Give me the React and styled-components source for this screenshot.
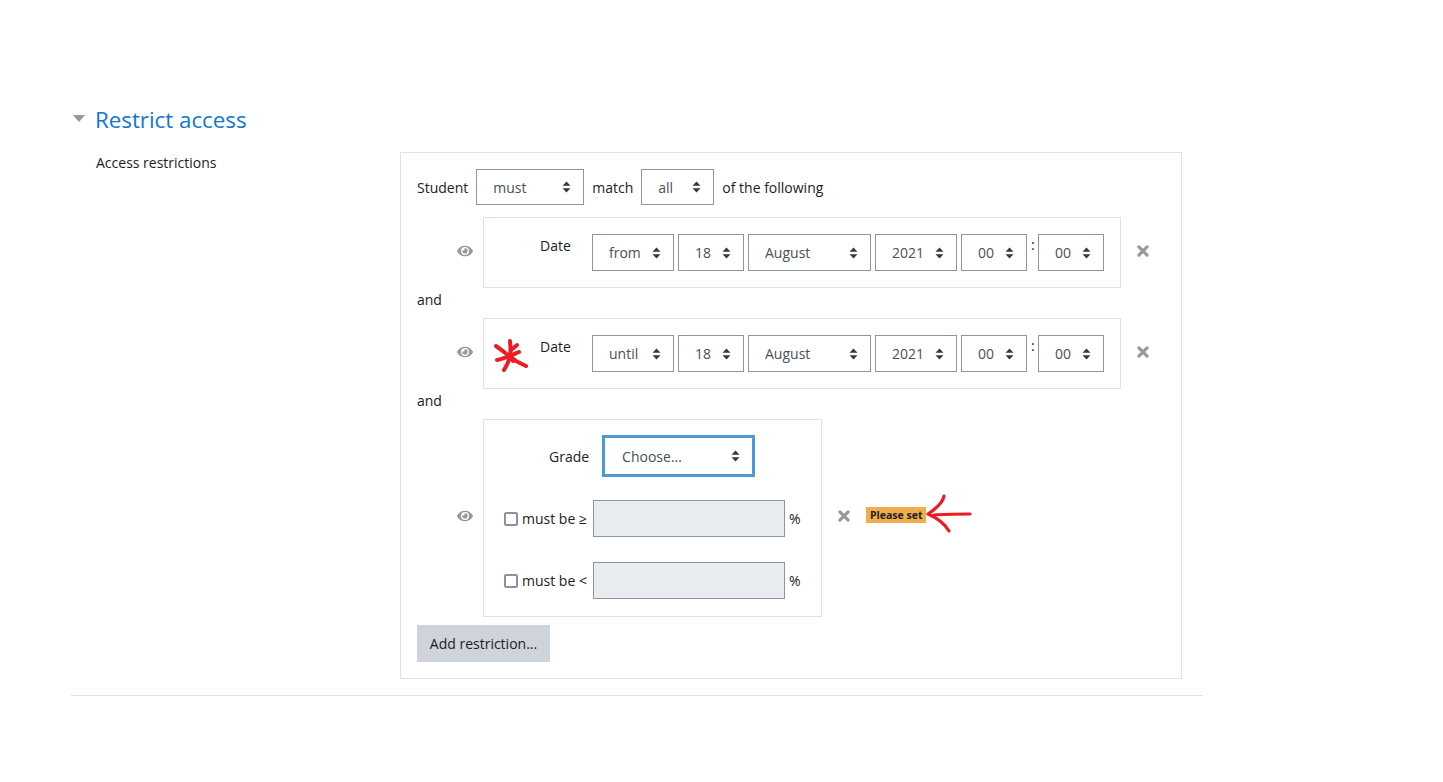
import React from "react";
import styled, { createGlobalStyle } from "styled-components";
import { FaEye } from "react-icons/fa";

const GlobalStyle = createGlobalStyle`
  html, body {
    margin: 0;
    background: #fff;
    color: #1d2125;
    font-family: "Open Sans", "Noto Sans", "Liberation Sans", sans-serif;
    font-size: 14px;
  }
`;

const Page = styled.div`
  width: 1132px;
  margin-left: 71px;
  padding-top: 103px;
`;

const Header = styled.div`
  display: flex;
  align-items: center;
  height: 32px;
  gap: 10px;
  margin-left: 2px;
`;

const Triangle = styled.span`
  width: 0;
  height: 0;
  margin-bottom: 2px;
  border-left: 6.5px solid transparent;
  border-right: 6.5px solid transparent;
  border-top: 7px solid #999;
`;

const Title = styled.h3`
  margin: 0;
  font-size: 22.3px;
  font-weight: 400;
  color: #1177d1;
`;

const FormRow = styled.div`
  display: flex;
  margin-top: 17px;
  padding-bottom: 16px;
  border-bottom: 1px solid #dee2e6;
`;

const FormLabel = styled.div`
  width: 304px;
  padding-left: 25px;
  padding-top: 1px;
  line-height: 20px;
`;

const Panel = styled.div`
  width: 782px;
  box-sizing: border-box;
  padding: 16px;
  border: 1px solid #dee2e6;
`;

const TopRow = styled.div`
  display: flex;
  align-items: center;
  gap: 8px;
  height: 36px;
  margin-bottom: 12px;
`;

const Rule = styled.div`
  display: flex;
  align-items: center;
`;

const EyeSlot = styled.div`
  width: 66px;
  padding-right: 10px;
  box-sizing: border-box;
  display: flex;
  justify-content: flex-end;
  margin-bottom: ${(p) => p.$lift}px;
  color: #999;
  font-size: 16px;
`;

const RuleBox = styled.div`
  position: relative;
  display: flex;
  align-items: flex-start;
  height: 71px;
  box-sizing: border-box;
  padding: 16px;
  width: 638px;
  border: 1px solid #dee2e6;
`;

const DateLabel = styled.span`
  margin-left: 40px;
  width: 71px;
  line-height: 24px;
`;

const Fields = styled.div`
  display: flex;
  gap: 4px;
`;

const Colon = styled.span`
  width: 3px;
  line-height: 22px;
  text-align: center;
`;

const Remove = styled.svg`
  flex: none;
  width: 12px;
  height: 12px;
  margin-left: 16px;
  margin-bottom: ${(p) => p.$lift}px;
`;

const RemoveIcon = ({ lift }) => (
  <Remove $lift={lift} viewBox="0 0 12 12">
    <path d="M1.9 1.9 L10.1 10.1 M10.1 1.9 L1.9 10.1" stroke="#999" strokeWidth="3.2" strokeLinecap="round" />
  </Remove>
);

const Joiner = styled.div`
  height: 30px;
  line-height: 24px;
`;

const SelectWrap = styled.span`
  position: relative;
  display: block;
  width: ${(p) => p.$w}px;
  height: ${(p) => (p.$h ? p.$h : 37)}px;
  flex: none;
`;

const NativeSelect = styled.select`
  appearance: none;
  width: 100%;
  height: 100%;
  box-sizing: border-box;
  padding: 0 0 0 ${(p) => (p.$focus ? 17 : 16)}px;
  background: #fff;
  border: ${(p) => (p.$focus ? "3.5px solid #4f97d9" : "1px solid #8f959e")};
  border-radius: 0;
  outline: none;
  color: #495057;
  font: inherit;
`;

const CaretIcon = styled.svg`
  position: absolute;
  right: ${(p) => (p.$focus ? 15 : 13)}px;
  top: 50%;
  margin-top: -6px;
  width: 9px;
  height: 12px;
  pointer-events: none;
`;

const Select = ({ w, h, focus, value }) => (
  <SelectWrap $w={w} $h={h}>
    <NativeSelect $focus={focus} defaultValue={value}>
      <option>{value}</option>
    </NativeSelect>
    <CaretIcon $focus={focus} viewBox="0 0 9 12">
      <path d="M4.5 0.5 L8.5 4.8 H0.5 Z M4.5 11.5 L0.5 7.2 H8.5 Z" fill="#343a40" />
    </CaretIcon>
  </SelectWrap>
);

const GradeBox = styled.div`
  width: 339px;
  height: 198px;
  box-sizing: border-box;
  padding: 15px 0 0 20px;
  border: 1px solid #dee2e6;
`;

const GradeRow = styled.div`
  display: flex;
  align-items: center;
  gap: 13px;
  height: 42px;
  margin: 0 0 23px 45px;
`;

const CheckRow = styled.div`
  display: flex;
  align-items: center;
  height: 37px;
  margin-bottom: 25px;
`;

const CheckBox = styled.input.attrs({ type: "checkbox" })`
  appearance: none;
  width: 14px;
  height: 14px;
  margin: 0 4px 0 0;
  box-sizing: border-box;
  border: 2px solid #8f8f9d;
  border-radius: 2px;
  background: #fff;
`;

const CheckText = styled.span`
  width: 71px;
  white-space: nowrap;
`;

const GreyInput = styled.input`
  width: 192px;
  height: 37px;
  box-sizing: border-box;
  background: #e9ecef;
  border: 1px solid #8f959e;
  border-radius: 0;
  padding: 0;
`;

const Percent = styled.span`
  margin-left: 4px;
`;

const Badge = styled.span`
  margin: 0 0 6px 16px;
  padding: 0 4px;
  height: 16px;
  line-height: 17px;
  background: #f0ad4e;
  color: #1d2125;
  font-size: 10.5px;
  font-weight: 700;
  white-space: nowrap;
`;

const AddButton = styled.button`
  display: block;
  width: 133px;
  height: 37px;
  margin-top: 8px;
  padding: 0;
  border: none;
  background: #ced4da;
  color: #1d2125;
  font: inherit;
`;

const Scribble = styled.svg`
  position: absolute;
  left: ${(p) => p.$x}px;
  top: ${(p) => p.$y}px;
  overflow: visible;
  pointer-events: none;
`;

const Star = () => (
  <Scribble $x={9} $y={19} width="36" height="36" viewBox="0 0 36 36">
    <g fill="none" stroke="#ed1c24" strokeWidth="4" strokeLinecap="round" strokeLinejoin="round">
      <path d="M17 3 C17.5 10 18 14 17 19 C15.5 24 13.5 28 11 32" />
      <path d="M3 8 C10 13 16 18 23 23 L33 28" />
      <path d="M4 22 C11 21 17 18 26 14" />
      <path d="M18 12 L24 7" />
      <path d="M16 17 L20 23" />
    </g>
  </Scribble>
);

const ArrowWrap = styled.span`
  position: relative;
  width: 0;
  height: 0;
  align-self: center;
`;

const Arrow = () => (
  <ArrowWrap>
    <Scribble $x={0} $y={-24} width="46" height="42" viewBox="0 0 46 42">
      <g fill="none" stroke="#ed1c24" strokeWidth="3.2" strokeLinecap="round" strokeLinejoin="round">
        <path d="M18 2 C17 8 11 14 2 20 C9 23 18 29 23 37" />
        <path d="M8 21 C18 20 32 20 44 20" />
      </g>
    </Scribble>
  </ArrowWrap>
);

const DateRule = ({ direction, star }) => (
  <Rule>
    <EyeSlot $lift={3}><FaEye /></EyeSlot>
    <RuleBox>
      {star && <Star />}
      <DateLabel>Date</DateLabel>
      <Fields>
        <Select w={82} value={direction} />
        <Select w={66} value="18" />
        <Select w={123} value="August" />
        <Select w={82} value="2021" />
        <Select w={66} value="00" />
        <Colon>:</Colon>
        <Select w={66} value="00" />
      </Fields>
    </RuleBox>
    <RemoveIcon lift={3} />
  </Rule>
);

export default function App() {
  return (
    <Page>
      <GlobalStyle />
      <Header>
        <Triangle />
        <Title>Restrict access</Title>
      </Header>
      <FormRow>
        <FormLabel>Access restrictions</FormLabel>
        <Panel>
          <TopRow>
            <span>Student</span>
            <Select w={108} h={36} value="must" />
            <span>match</span>
            <Select w={73} h={36} value="all" />
            <span>of the following</span>
          </TopRow>
          <DateRule direction="from" />
          <Joiner>and</Joiner>
          <DateRule direction="until" star />
          <Joiner>and</Joiner>
          <Rule>
            <EyeSlot $lift={4}><FaEye /></EyeSlot>
            <GradeBox>
              <GradeRow>
                <span>Grade</span>
                <Select w={153} h={42} focus value="Choose..." />
              </GradeRow>
              <CheckRow>
                <CheckBox />
                <CheckText>must be ≥</CheckText>
                <GreyInput disabled />
                <Percent>%</Percent>
              </CheckRow>
              <CheckRow>
                <CheckBox />
                <CheckText>must be &lt;</CheckText>
                <GreyInput disabled />
                <Percent>%</Percent>
              </CheckRow>
            </GradeBox>
            <RemoveIcon lift={4} />
            <Badge>Please set</Badge>
            <Arrow />
          </Rule>
          <AddButton>Add restriction...</AddButton>
        </Panel>
      </FormRow>
    </Page>
  );
}
